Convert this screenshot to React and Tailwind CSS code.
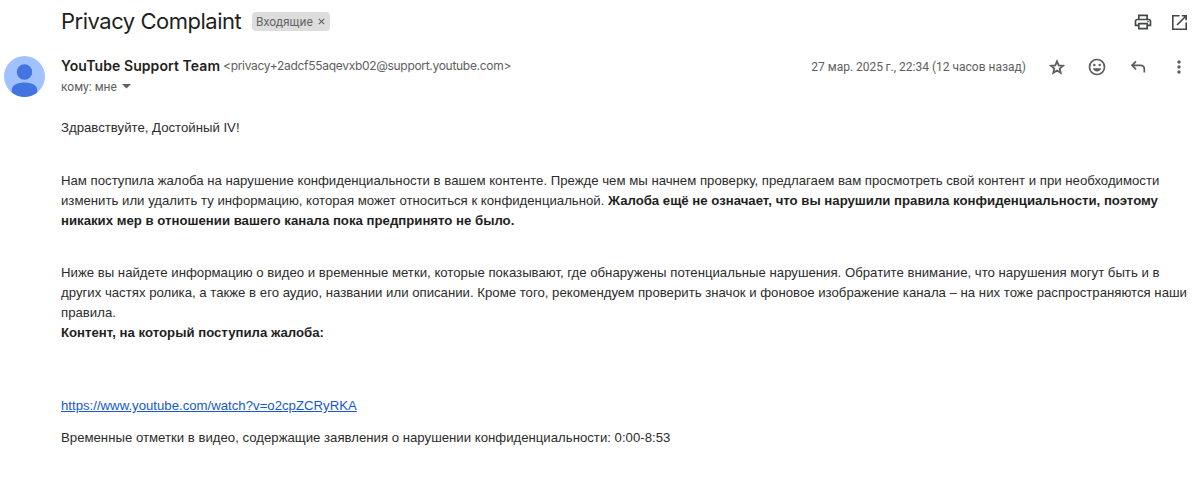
import React from "react";
import { MdOutlinePrint, MdMoreVert } from "react-icons/md";

// Abrir en ventana nueva
const OpenIcon = () => (
  <svg width="17" height="17" viewBox="0 0 17 17" fill="none" stroke="#444746" strokeWidth="1.6">
    <path d="M8.5 1.8H1.8v13.4h13.4V8.5" />
    <path d="M10.8 1.8h4.4v4.4M15 2L6 11" />
  </svg>
);

const StarIcon = () => (
  <svg width="16" height="16" viewBox="0 0 16 16" fill="none" stroke="#5b5d5e" strokeWidth="1.8">
    <path d="M8 2.4l1.7 4 4.3.4-3.3 2.8 1 4.2L8 11.6l-3.7 2.2 1-4.2L2 6.8l4.3-.4z" />
  </svg>
);

const SmileIcon = () => (
  <svg width="18" height="18" viewBox="0 0 18 18" fill="none">
    <circle cx="9" cy="9" r="7.5" stroke="#5b5d5e" strokeWidth="1.7" />
    <circle cx="6.3" cy="6.9" r="1.25" fill="#5b5d5e" />
    <circle cx="11.7" cy="6.9" r="1.25" fill="#5b5d5e" />
    <path d="M4.8 10.3h8.4c-.6 1.9-2.2 3.1-4.2 3.1s-3.6-1.2-4.2-3.1z" fill="#5b5d5e" />
  </svg>
);

const ReplyIcon = () => (
  <svg width="16" height="14" viewBox="0 0 16 14" fill="none" stroke="#5b5d5e" strokeWidth="1.7">
    <path d="M6 1.3L2 5.3l4 4M2 5.3h8.6c2.2 0 3.7 1.6 3.7 3.7v3.5" />
  </svg>
);

const Avatar = () => (
  <svg width="41" height="41" viewBox="0 0 41 41">
    <circle cx="20.5" cy="20.5" r="20.5" fill="#a0c3ff" />
    <circle cx="20.5" cy="16" r="7.7" fill="#4374e0" />
    <path d="M7.8 36.6v-3.2c0-4.6 6.4-7 12.7-7s12.7 2.4 12.7 7v3.2a20.5 20.5 0 0 1-25.4 0z" fill="#4374e0" />
  </svg>
);

const App = () => {
  return (
    <div className="h-[478px] w-[1200px] overflow-hidden bg-white font-['Inter',sans-serif] text-[#5e5e5e]">
      {/* Asunto */}
      <header className="flex h-11 items-center pl-[61px] pr-3">
        <h1 className="-mt-0.5 w-[181px] whitespace-nowrap text-[22px] leading-7 tracking-[-0.49px] text-[#1f1f1f]">Privacy Complaint</h1>
        <div className="-mt-px ml-[10px] flex h-[19px] w-[78px] items-center justify-between rounded bg-[#dddddd] pl-1 pr-[5px] font-['Roboto',sans-serif] text-[12px] text-[#666]">
          <span>Входящие</span>
          <svg width="7" height="7" viewBox="0 0 7 7" stroke="#666" strokeWidth="1.2">
            <path d="M.8.8l5.4 5.4M6.2.8L.8 6.2" />
          </svg>
        </div>
        <div className="ml-auto flex items-center gap-[18px]">
          <MdOutlinePrint size={20} color="#444746" />
          <OpenIcon />
        </div>
      </header>

      {/* Remitente */}
      <section className="flex h-[74px] pl-1 pt-3">
        <Avatar />
        <div className="ml-4 flex flex-col">
          <div className="flex h-5 items-center whitespace-nowrap">
            <span className="-mt-px w-[159px] text-[14px] font-semibold tracking-[0.08px] text-[#1f1f1f]">YouTube Support Team</span>
            <span className="ml-[3px] text-[12px] tracking-[-0.3px]">&lt;privacy+2adcf55aqevxb02@support.youtube.com&gt;</span>
          </div>
          <div className="flex h-[21px] items-center gap-[5px] font-['Roboto',sans-serif] text-[12px]">
            <span>кому: мне</span>
            <svg width="9" height="5" viewBox="0 0 9 5" fill="#5e5e5e"><path d="M0 0h9L4.5 4.6z" /></svg>
          </div>
        </div>
        <div className="ml-auto flex h-[21px] items-center whitespace-nowrap pr-[11px]">
          <span className="mr-[23px] font-['Roboto',sans-serif] text-[12px]">27 мар. 2025&#8201;г., 22:34 (12 часов назад)</span>
          <span className="mr-[23px]"><StarIcon /></span>
          <span className="mr-6"><SmileIcon /></span>
          <span className="mr-[23px]"><ReplyIcon /></span>
          <MdMoreVert size={20} color="#5b5d5e" />
        </div>
      </section>

      {/* Mensaje */}
      <main className="whitespace-nowrap pl-[61px] font-['Liberation_Sans',sans-serif] text-[13.2px] leading-5 text-[#2c2c2c]">
        <p>Здравствуйте, Достойный IV!</p>
        <div className="mt-[33px]">
          <p>Нам поступила жалоба на нарушение конфиденциальности в вашем контенте. Прежде чем мы начнем проверку, предлагаем вам просмотреть свой контент и при необходимости</p>
          <p>изменить или удалить ту информацию, которая может относиться к конфиденциальной. <b className="text-[#1f1f1f]">Жалоба ещё не означает, что вы нарушили правила конфиденциальности, поэтому</b></p>
          <p><b className="text-[#1f1f1f]">никаких мер в отношении вашего канала пока предпринято не было.</b></p>
        </div>
        <div className="mt-8">
          <p>Ниже вы найдете информацию о видео и временные метки, которые показывают, где обнаружены потенциальные нарушения. Обратите внимание, что нарушения могут быть и в</p>
          <p>других частях ролика, а также в его аудио, названии или описании. Кроме того, рекомендуем проверить значок и фоновое изображение канала – на них тоже распространяются наши</p>
          <p>правила.</p>
          <p><b className="text-[#1f1f1f]">Контент, на который поступила жалоба:</b></p>
        </div>
        <p className="mt-[53px]"><a href="#" className="text-[#1558d0] underline">https://www.youtube.com/watch?v=o2cpZCRyRKA</a></p>
        <p className="mt-3">Временные отметки в видео, содержащие заявления о нарушении конфиденциальности: 0:00-8:53</p>
      </main>
    </div>
  );
};

export default App;
